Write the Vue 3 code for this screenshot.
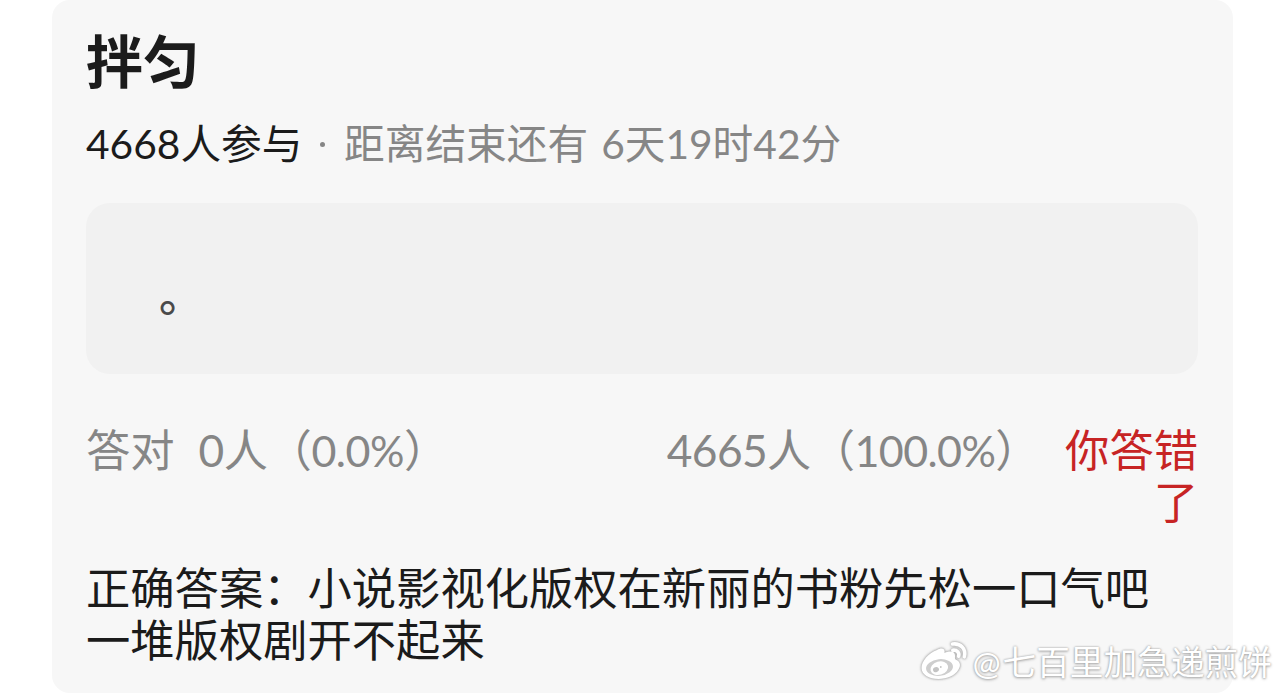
<script setup>
const quiz = {
  title: '拌匀',
  joined: '4668人参与',
  remainLabel: '距离结束还有',
  remainTime: '6天19时42分',
  content: '。',
  right: {count: '0人', percent: '0.0%'},
  wrong: {count: '4665人', percent: '100.0%'},
  result: '你答错了',
  answer: '正确答案：小说影视化版权在新丽的书粉先松一口气吧一堆版权剧开不起来',
};

const author = '七百里加急递煎饼';
</script>

<template>
  <div class="page">
    <section class="card">
      <h1 class="title">{{ quiz.title }}</h1>
      <div class="meta">
        <span class="joined">{{ quiz.joined }}</span>
        <span class="dot"></span>
        <span>{{ quiz.remainLabel }}</span>
        <span class="time">{{ quiz.remainTime }}</span>
      </div>
      <div class="content">{{ quiz.content }}</div>
      <div class="stats">
        <span>答对</span>
        <span class="right">{{ quiz.right.count }}（<span class="percent">{{ quiz.right.percent }}</span>）</span>
        <span class="wrong">{{ quiz.wrong.count }}（<span class="percent">{{ quiz.wrong.percent }}</span>）</span>
        <span class="result">{{ quiz.result }}</span>
      </div>
      <p class="answer">{{ quiz.answer }}</p>
    </section>

    <div class="watermark">
      <svg class="logo" viewBox="0 0 48 42" width="48" height="42">
        <path
          fill="#fff"
          d="M17 9C21 6.500 25.500 7 24.500 12C29 9.800 35.500 9.500 35 15.500C34.800 17.500 35 18.300 36 18.800C40.500 20.500 41 25 38.500 28.500C35 34.500 27 38 18.500 38C9 38 1.500 33.500 1.500 27C1.500 20 9 11.500 17 9Z"
        />
        <ellipse cx="19.500" cy="26.500" rx="13.500" ry="8.300" fill="#cecece" transform="rotate(-6 19.500 26.500)" />
        <ellipse cx="19.300" cy="27.200" rx="9" ry="6.600" fill="#fff" transform="rotate(-16 19.300 27.200)" />
        <ellipse cx="16" cy="28.600" rx="3" ry="2.500" fill="#c4c4c4" transform="rotate(-20 16 28.600)" />
        <circle cx="20.800" cy="26" r="0.900" fill="#c4c4c4" />
        <path
          fill="none"
          stroke="#fff"
          stroke-width="3.600"
          stroke-linecap="round"
          d="M32.500 3C40.500 1.800 46.500 8 44.300 15.800M32.800 9.200C37 8.600 39.800 11.800 38.600 15.200"
        />
      </svg>
      <span class="at">@</span>
      <span>{{ author }}</span>
    </div>
  </div>
</template>

<style>
body {
  background: #fff;
}
</style>

<style scoped>
.page {
  position: relative;
  box-sizing: border-box;
  width: 1284px;
  height: 693px;
  padding: 0 51px 0 52px;
  overflow: hidden;
  font-family: Lato, "Noto Sans CJK SC", sans-serif;
  color: #1b1b1b;
}

.card {
  box-sizing: border-box;
  height: 693px;
  padding: 21px 35px 0 34px;
  border-radius: 18px;
  background: #f7f7f7;
}

.title {
  margin: 0;
  font-size: 57px;
  line-height: 80px;
  font-weight: 700;
}

.meta {
  display: flex;
  align-items: center;
  margin-top: 18px;
  font-size: 40.7px;
  line-height: 50px;
  color: #868686;
  white-space: nowrap;
}

.joined {
  width: 234px;
  color: #1b1b1b;
}

.dot {
  width: 5px;
  height: 5px;
  margin-right: 19px;
  border-radius: 50%;
  background: #868686;
}

.time {
  margin-left: 13px;
}

.content {
  box-sizing: border-box;
  height: 171px;
  margin-top: 34px;
  padding: 66px 73px;
  border-radius: 24px;
  background: #f1f1f1;
  color: #4a4a4a;
  font-size: 44.3px;
  font-weight: 500;
  line-height: 52px;
}

.stats {
  display: flex;
  margin-top: 50px;
  font-size: 44.3px;
  line-height: 52px;
  color: #868686;
  white-space: nowrap;
}

.right {
  margin-left: 24px;
  letter-spacing: -0.5px;
}

.wrong {
  margin-left: auto;
  letter-spacing: -0.6px;
}

.percent {
  font-size: 43px;
}

.result {
  width: 133px;
  margin-left: 26px;
  color: #c72424;
  text-align: right;
  white-space: normal;
}

.answer {
  margin: 34px 0 0;
  padding-right: 20px;
  font-size: 44.3px;
  line-height: 52px;
}

/* author mark laid over the corner of the card */
.watermark {
  position: absolute;
  right: 12px;
  bottom: 10px;
  display: flex;
  align-items: center;
  color: #fff;
  font-size: 33.7px;
  line-height: 42px;
  white-space: nowrap;
  text-shadow: 0 0 2px #999, 0 1px 3px #aaa;
}

.logo {
  margin-right: 4px;
  filter: drop-shadow(0 0 1px #aaa) drop-shadow(0 0 1px #bbb);
}

.at {
  width: 30px;
}
</style>
